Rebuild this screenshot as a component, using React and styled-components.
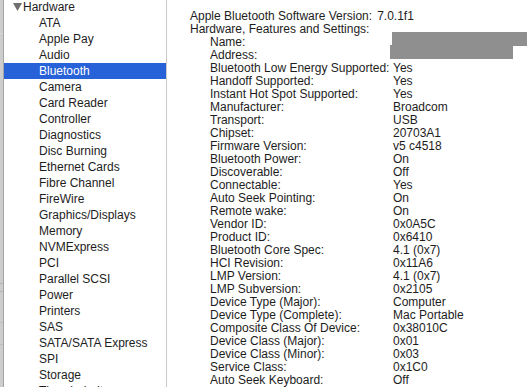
import styled, { createGlobalStyle } from 'styled-components';

const GlobalStyle = createGlobalStyle`
  html, body {
    margin: 0;
    padding: 0;
    background: #ffffff;
  }
  body {
    font-family: "Liberation Sans", Arial, sans-serif;
    -webkit-font-smoothing: antialiased;
  }
`;

// 전체 창: 뒤쪽 창 조각 + 사이드바 + 상세 정보
const Window = styled.div`
  display: flex;
  width: 100vw;
  height: 100vh;
  overflow: hidden;
  background: #ffffff;
`;

// 왼쪽 끝에 살짝 보이는 뒤 창
const BehindStrip = styled.div`
  position: relative;
  flex: 0 0 3px;
  background: #cdcdcd;
  border-right: 1px solid #a4a4a4;
`;

const StripLine = styled.div`
  position: absolute;
  left: 0;
  right: 0;
  top: ${(p) => p.$top}px;
  height: 1px;
  background: ${(p) => p.$color || '#b2b2b2'};
`;

const Sidebar = styled.div`
  flex: 0 0 162px;
  border-right: 1px solid #c9c9c9;
  overflow: hidden;
`;

const SideList = styled.ul`
  list-style: none;
  margin: -1px 0 0;
  padding: 0;
`;

const SideRow = styled.li`
  display: flex;
  align-items: center;
  height: 16px;
  line-height: 16px;
  padding-left: ${(p) => (p.$group ? 9 : 35)}px;
  font-size: 12px;
  color: ${(p) => (p.$selected ? '#ffffff' : '#1d1d1d')};
  background: ${(p) => (p.$selected ? '#2862d8' : 'transparent')};
  white-space: nowrap;
`;

const Disclosure = styled.svg`
  width: 9px;
  height: 8px;
  margin-right: 1px;
  flex: none;
`;

const Detail = styled.div`
  flex: 1;
  padding: 10px 0 0 23px;
  font-size: 12px;
  line-height: 13px;
  color: #1d1d1d;
  overflow: hidden;
  white-space: nowrap;
`;

const TopLine = styled.div`
  display: flex;
  gap: 5px;
`;

const PropGrid = styled.div`
  display: grid;
  grid-template-columns: 183px 1fr;
  padding-left: 20px;
`;

const Cell = styled.div`
  position: relative;
  height: 13px;
`;

// 가려진 값 (이름 / 주소)
const Redact = styled.span`
  position: absolute;
  top: -4px;
  left: ${(p) => p.$left}px;
  width: ${(p) => p.$width}px;
  height: 14px;
  background: #8f8f8f;
`;

const sideItems = [
  'ATA',
  'Apple Pay',
  'Audio',
  'Bluetooth',
  'Camera',
  'Card Reader',
  'Controller',
  'Diagnostics',
  'Disc Burning',
  'Ethernet Cards',
  'Fibre Channel',
  'FireWire',
  'Graphics/Displays',
  'Memory',
  'NVMExpress',
  'PCI',
  'Parallel SCSI',
  'Power',
  'Printers',
  'SAS',
  'SATA/SATA Express',
  'SPI',
  'Storage',
  'Thunderbolt',
];

const props = [
  ['Name:', { redact: [-1, 140] }],
  ['Address:', { redact: [-3, 123] }],
  ['Bluetooth Low Energy Supported:', 'Yes'],
  ['Handoff Supported:', 'Yes'],
  ['Instant Hot Spot Supported:', 'Yes'],
  ['Manufacturer:', 'Broadcom'],
  ['Transport:', 'USB'],
  ['Chipset:', '20703A1'],
  ['Firmware Version:', 'v5 c4518'],
  ['Bluetooth Power:', 'On'],
  ['Discoverable:', 'Off'],
  ['Connectable:', 'Yes'],
  ['Auto Seek Pointing:', 'On'],
  ['Remote wake:', 'On'],
  ['Vendor ID:', '0x0A5C'],
  ['Product ID:', '0x6410'],
  ['Bluetooth Core Spec:', '4.1 (0x7)'],
  ['HCI Revision:', '0x11A6'],
  ['LMP Version:', '4.1 (0x7)'],
  ['LMP Subversion:', '0x2105'],
  ['Device Type (Major):', 'Computer'],
  ['Device Type (Complete):', 'Mac Portable'],
  ['Composite Class Of Device:', '0x38010C'],
  ['Device Class (Major):', '0x01'],
  ['Device Class (Minor):', '0x03'],
  ['Service Class:', '0x1C0'],
  ['Auto Seek Keyboard:', 'Off'],
];

const App = () => {
  return (
    <>
      <GlobalStyle />
      <Window>
        <BehindStrip>
          <StripLine $top={33} $color="#d9d9d9" />
          <StripLine $top={283} />
          <StripLine $top={291} />
          <StripLine $top={322} $color="#bdbdbd" />
          <StripLine $top={344} $color="#bdbdbd" />
        </BehindStrip>
        <Sidebar>
          <SideList>
            <SideRow $group>
              <Disclosure viewBox="0 0 9 8">
                <polygon points="0,0 9,0 4.5,8" fill="#6f6f6f" />
              </Disclosure>
              Hardware
            </SideRow>
            {sideItems.map((item) => (
              <SideRow key={item} $selected={item === 'Bluetooth'}>
                {item}
              </SideRow>
            ))}
          </SideList>
        </Sidebar>
        <Detail>
          <TopLine>
            <span>Apple Bluetooth Software Version:</span>
            <span>7.0.1f1</span>
          </TopLine>
          <div>Hardware, Features and Settings:</div>
          <PropGrid>
            {props.map(([label, value]) => (
              <React.Fragment key={label}>
                <Cell>{label}</Cell>
                <Cell>
                  {typeof value === 'string' ? (
                    value
                  ) : (
                    <Redact $left={value.redact[0]} $width={value.redact[1]} />
                  )}
                </Cell>
              </React.Fragment>
            ))}
          </PropGrid>
        </Detail>
      </Window>
    </>
  );
};

import React from 'react';

export default App;
